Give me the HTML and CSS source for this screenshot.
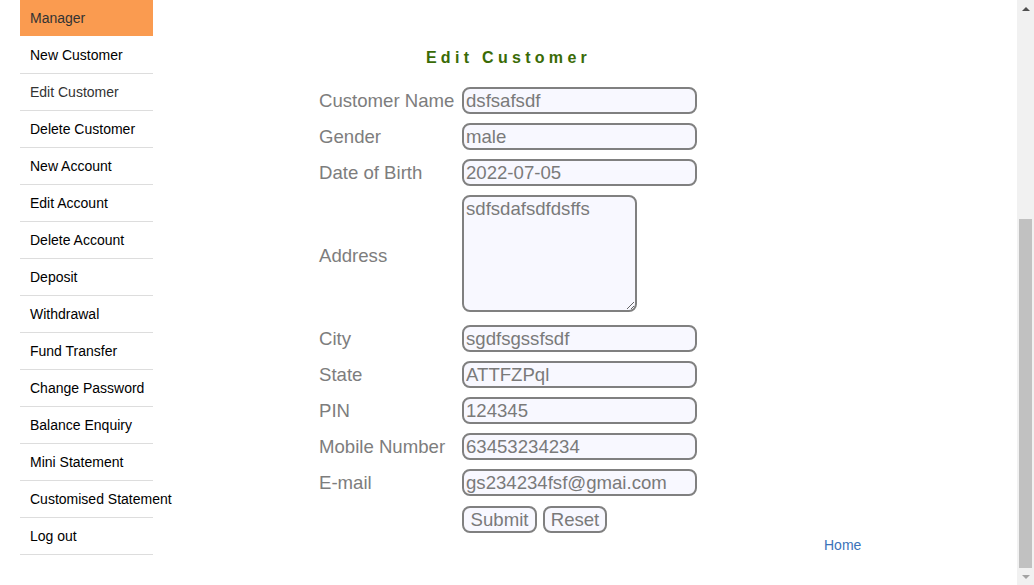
FILE: index.html
```html
<!DOCTYPE html>
<html>
<head>
<meta charset="utf-8">
<title>Edit Customer</title>
<link rel="stylesheet" href="styles.css">
</head>
<body>
<div class="screen">
  <div class="main">
    <div class="left">
      <ul class="menu">
        <li class="menu-item head">Manager</li>
        <li class="menu-item">New Customer</li>
        <li class="menu-item visited">Edit Customer</li>
        <li class="menu-item">Delete Customer</li>
        <li class="menu-item">New Account</li>
        <li class="menu-item">Edit Account</li>
        <li class="menu-item">Delete Account</li>
        <li class="menu-item">Deposit</li>
        <li class="menu-item">Withdrawal</li>
        <li class="menu-item">Fund Transfer</li>
        <li class="menu-item">Change Password</li>
        <li class="menu-item">Balance Enquiry</li>
        <li class="menu-item">Mini Statement</li>
        <li class="menu-item">Customised Statement</li>
        <li class="menu-item">Log out</li>
      </ul>
    </div>
    <div class="center">
      <h2 class="heading">Edit Customer</h2>
      <form class="form">
        <label class="label">Customer Name</label>
        <input class="field" type="text" value="dsfsafsdf">
        <label class="label">Gender</label>
        <input class="field" type="text" value="male">
        <label class="label">Date of Birth</label>
        <input class="field" type="text" value="2022-07-05">
        <label class="label">Address</label>
        <textarea class="area">sdfsdafsdfdsffs</textarea>
        <label class="label">City</label>
        <input class="field" type="text" value="sgdfsgssfsdf">
        <label class="label">State</label>
        <input class="field" type="text" value="ATTFZPql">
        <label class="label">PIN</label>
        <input class="field" type="text" value="124345">
        <label class="label">Mobile Number</label>
        <input class="field" type="text" value="63453234234">
        <label class="label">E-mail</label>
        <input class="field" type="text" value="gs234234fsf@gmai.com">
        <span></span>
        <div class="buttons">
          <button class="btn" type="button">Submit</button>
          <button class="btn" type="button">Reset</button>
        </div>
      </form>
    </div>
    <div class="right">
      <a class="home" href="#">Home</a>
    </div>
  </div>
  <div class="scrollbar">
    <div class="sb-btn"><span class="arrow-up"></span></div>
    <div class="sb-track"><div class="sb-thumb"></div></div>
    <div class="sb-btn"><span class="arrow-down"></span></div>
  </div>
</div>
</body>
</html>
```

FILE: styles.css
```css
* { box-sizing: border-box; }
html, body { margin: 0; padding: 0; }
body {
  font-family: "Liberation Sans", Arial, sans-serif;
  background: #fff;
  overflow: hidden;
}
.screen {
  display: flex;
  width: 1034px;
  height: 585px;
}
.main {
  flex: 1;
  display: grid;
  grid-template-columns: 1fr auto 1fr;
  height: 585px;
}
.left { padding-left: 20px; }
.menu {
  list-style: none;
  margin: 0;
  padding: 0;
  width: 133px;
}
.menu-item {
  height: 37px;
  line-height: 36px;
  padding-left: 10px;
  font-size: 14px;
  color: #000;
  border-bottom: 1px solid #dddddd;
  white-space: nowrap;
}
.menu-item.head {
  background: #fa9b50;
  color: #333;
  border-bottom: 1px solid #fff;
  height: 37px;
}
.menu-item.visited { color: #333; }

.center {
  width: 379px;
  display: flex;
  flex-direction: column;
}
.heading {
  margin: 48px 0 0 0;
  height: 20px;
  line-height: 20px;
  font-size: 16px;
  font-weight: bold;
  letter-spacing: 4.3px;
  text-indent: 0;
  text-align: center;
  color: #3a6b06;
}
.form {
  margin-top: 19px;
  display: grid;
  grid-template-columns: 143px 235px;
  row-gap: 9px;
  align-items: center;
}
.label {
  font-size: 18.6px;
  color: #7d7d7d;
  white-space: nowrap;
}
.field, .area, .btn {
  font-family: "Liberation Sans", Arial, sans-serif;
  font-size: 18.6px;
  color: #7a7a7a;
  background: #f8f8ff;
  border: 2px solid #808080;
  border-radius: 8px;
  outline: none;
}
.field {
  width: 235px;
  height: 27px;
  padding: 0 2px;
}
.area {
  width: 175px;
  height: 117px;
  padding: 1px 2px;
  margin-bottom: 4px;
  resize: both;
  display: block;
}
.buttons {
  display: flex;
  gap: 6px;
  margin-top: 1px;
}
.btn {
  height: 27px;
  padding: 0 4px;
  line-height: 21px;
}
.btn:first-child { width: 75px; }
.btn:last-child { width: 64px; }

.right {
  align-self: end;
  padding-left: 126px;
  padding-bottom: 31px;
}
.home {
  font-size: 14px;
  line-height: 16px;
  color: #3b73b9;
  text-decoration: none;
}

.scrollbar {
  width: 17px;
  height: 585px;
  background: #f1f1f1;
  display: flex;
  flex-direction: column;
}
.sb-btn {
  height: 17px;
  display: flex;
  align-items: center;
  justify-content: center;
}
.arrow-up {
  width: 0; height: 0;
  border-left: 4px solid transparent;
  border-right: 4px solid transparent;
  border-bottom: 4px solid #505050;
}
.arrow-down {
  width: 0; height: 0;
  border-left: 4px solid transparent;
  border-right: 4px solid transparent;
  border-top: 4px solid #a3a3a3;
}
.sb-track {
  flex: 1;
  display: flex;
  flex-direction: column;
  justify-content: flex-end;
}
.sb-thumb {
  height: 349px;
  margin: 0 2px;
  background: #c1c1c1;
}
```
